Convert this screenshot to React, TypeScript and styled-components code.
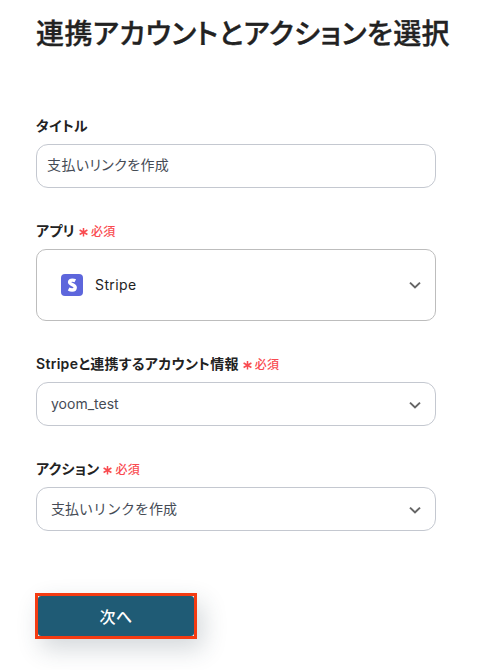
import styled, { createGlobalStyle } from "styled-components";

interface SelectFieldProps {
  label: string;
  value: string;
  large?: boolean;
}

const ChevronIcon = () => (
  <svg width="12" height="8" viewBox="0 0 12 8" fill="none">
    <path d="M1 1.600 6 6.400l5-4.800" stroke="#666" strokeWidth="2" />
  </svg>
);

const StripeIcon = () => (
  <svg width="22" height="22" viewBox="0 0 22 22">
    <rect width="22" height="22" rx="4" fill="#5d66dc" />
    <path
      d="M14.300 6.800C13.300 6.300 12.400 6.100 11.300 6.100 9.600 6.100 8.600 6.800 8.600 8c0 2.900 5.600 2.400 5.600 5.500 0 1.700-1.300 2.500-3.100 2.500-1.300 0-2.400-.4-3.500-1"
      fill="none"
      stroke="#fff"
      strokeWidth="3.400"
    />
  </svg>
);

const RequiredMark = () => (
  <Required>
    <svg width="9" height="10" viewBox="0 0 9 10">
      <path
        d="M4.500 1v8.500M.6 3l7.800 4.500M8.400 3 .6 7.500"
        stroke="#f94b50"
        strokeWidth="1.500"
      />
    </svg>
    必須
  </Required>
);

const SelectField = ({ label, value, large }: SelectFieldProps) => (
  <Field>
    <Label>
      {label}
      <RequiredMark />
    </Label>
    <SelectBox type="button" $large={large}>
      {large && <StripeIcon />}
      <SelectValue>{value}</SelectValue>
      <ChevronIcon />
    </SelectBox>
  </Field>
);

export default function App() {
  return (
    <>
      <GlobalStyle />
      <Page>
        <Title>連携アカウントとアクションを選択</Title>
        <Form>
          <Field>
            <Label htmlFor="title">タイトル</Label>
            <Input id="title" defaultValue="支払いリンクを作成" />
          </Field>
          <SelectField label="アプリ" value="Stripe" large />
          <SelectField
            label="Stripeと連携するアカウント情報"
            value="yoom_test"
          />
          <SelectField label="アクション" value="支払いリンクを作成" />
        </Form>
        <Highlight>
          <NextBtn type="button">次へ</NextBtn>
        </Highlight>
      </Page>
    </>
  );
}

const GlobalStyle = createGlobalStyle`
  * {
    box-sizing: border-box;
  }

  body {
    margin: 0;
    background-color: #fff;
    color: #222;
    font-family: Inter, "Noto Sans CJK JP", sans-serif;
    font-feature-settings: "palt";
  }
`;

const Page = styled.main`
  height: 670px;
  padding: 13px 0 0 36px;
  overflow: hidden;
`;

const Title = styled.h1`
  margin: 0;
  font-size: 28px;
  font-weight: 500;
  line-height: 42px;
  letter-spacing: 0.4px;
  -webkit-text-stroke: 0.35px #222;
  white-space: nowrap;
`;

const Form = styled.form`
  display: flex;
  flex-direction: column;
  gap: 33px;
  width: 400px;
  margin-top: 61px;
`;

const Field = styled.div`
  display: flex;
  flex-direction: column;
  gap: 8px;
`;

const Label = styled.label`
  display: flex;
  align-items: center;
  height: 20px;
  font-size: 14px;
  font-weight: 600;
  line-height: 20px;
  letter-spacing: 0.3px;
`;

const Required = styled.span`
  display: flex;
  align-items: center;
  gap: 3px;
  margin-left: 4px;
  color: #f94b50;
  font-size: 12px;
  font-weight: 500;
  line-height: 20px;
  padding-top: 1px;
`;

const Input = styled.input`
  width: 100%;
  height: 44px;
  padding: 0 10px 4px;
  border: 1px solid #c4c8d0;
  border-radius: 12px;
  color: #454b55;
  font: inherit;
  font-size: 14px;
  font-feature-settings: "palt";
  letter-spacing: 0.4px;
`;

const SelectBox = styled.button<{ $large?: boolean }>`
  display: flex;
  align-items: center;
  width: 100%;
  height: ${({ $large }) => ($large ? "72px" : "44px")};
  padding: 0 14px 0 ${({ $large }) => ($large ? "24px" : "14px")};
  border: 1px solid ${({ $large }) => ($large ? "#bdbdbd" : "#c4c8d0")};
  border-radius: ${({ $large }) => ($large ? "10px" : "12px")};
  background-color: #fff;
  color: ${({ $large }) => ($large ? "#222" : "#454b55")};
  font: inherit;
  font-size: 14px;
  line-height: 20px;
  font-feature-settings: normal;
  letter-spacing: ${({ $large }) => ($large ? "0.4px" : "0")};
  text-align: left;

  & > span {
    margin-left: ${({ $large }) => ($large ? "12px" : "0")};
  }

  & > svg:last-child {
    margin-top: ${({ $large }) => ($large ? "0" : "1px")};
  }
`;

const SelectValue = styled.span`
  flex: 1;
  padding-bottom: 1px;
`;

const Highlight = styled.div`
  width: 162px;
  height: 46px;
  margin: 62px 0 0 -1px;
  border: 3px solid #f43b12;
  box-shadow: 6px 10px 24px rgba(40, 60, 75, 0.2);
`;

const NextBtn = styled.button`
  display: block;
  width: 100%;
  height: 100%;
  padding: 0;
  border: none;
  border-radius: 3px;
  background-color: #1f5b75;
  color: #fff;
  font: inherit;
  font-size: 16px;
  font-weight: 500;
  letter-spacing: 0.4px;
`;
